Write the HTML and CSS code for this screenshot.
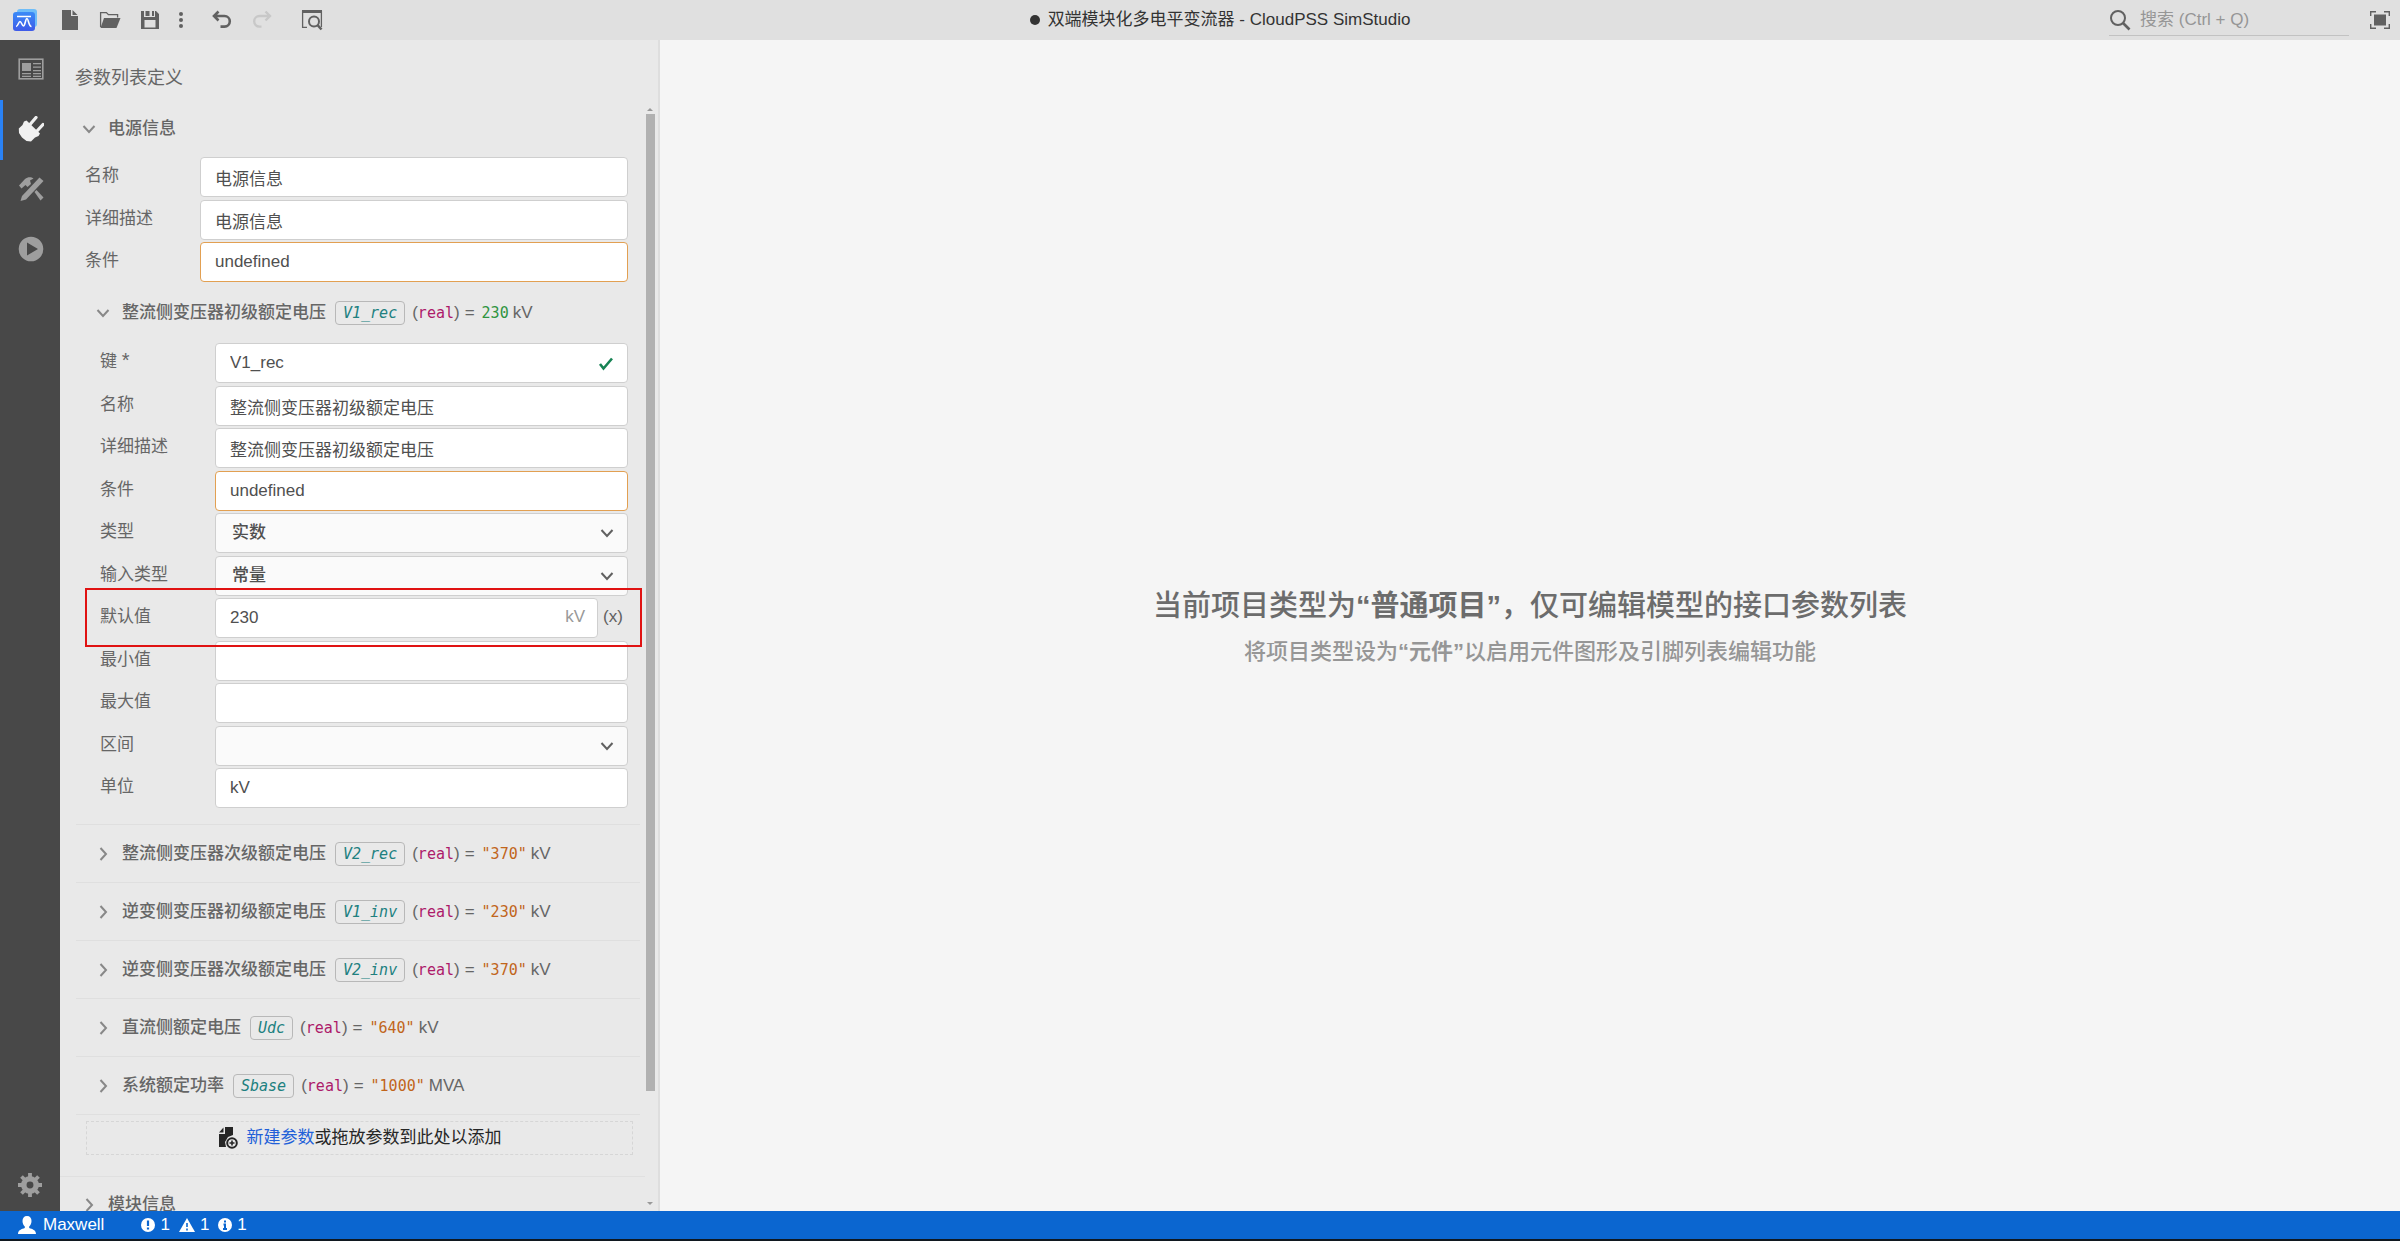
FILE: index.html
```html
<!DOCTYPE html>
<html lang="zh-CN">
<head>
<meta charset="utf-8">
<title>双端模块化多电平变流器 - CloudPSS SimStudio</title>
<link rel="stylesheet" href="styles.css">
</head>
<body>
<svg class="defs" width="0" height="0" aria-hidden="true">
  <symbol id="chev-down" viewBox="0 0 14 14"><path d="M1.500 4l5.500 6 5.500-6" fill="none" stroke="currentColor" stroke-width="2"/></symbol>
  <symbol id="chev-right" viewBox="0 0 14 14"><path d="M4.500 1l5.500 6-5.500 6" fill="none" stroke="currentColor" stroke-width="2"/></symbol>
</svg>

<header class="titlebar">
  <div class="toolbar">
    <span class="logo">
      <svg width="26" height="24" viewBox="0 0 26 24"><defs><linearGradient id="lg" x1="0" y1="0" x2="0" y2="1"><stop offset="0" stop-color="#3a8bf7"/><stop offset="1" stop-color="#3f5ae8"/></linearGradient></defs><rect x="5" y="1" width="20" height="18" rx="3" fill="#6fbdf8"/><rect x="1" y="4" width="22" height="19" rx="3" fill="url(#lg)"/><path d="M5 8.500h14" stroke="#fff" stroke-width="1.500"/><path d="M4 18.500c2 0 2.500-5 4-5s2 4.500 3.500 4.500 2-7.500 3.500-7.500 1.500 8 4.500 8" fill="none" stroke="#fff" stroke-width="1.600"/></svg>
    </span>
    <button class="tool" aria-label="新建"><svg width="20" height="22" viewBox="0 0 20 22"><path d="M2 1h9v6h7v14H2z" fill="currentColor"/><path d="M12.500 1l5 5h-5z" fill="currentColor"/></svg></button>
    <button class="tool" aria-label="打开"><svg width="22" height="20" viewBox="0 0 22 20"><path d="M1.600 17V2.600h5.800l2 2h9.200v3" fill="none" stroke="currentColor" stroke-width="1.300"/><path d="M5 8h16.500l-4 10H1.500z" fill="currentColor"/></svg></button>
    <button class="tool" aria-label="保存"><svg width="20" height="20" viewBox="0 0 20 20"><path fill-rule="evenodd" fill="currentColor" d="M1 1h3v6h11V1h1l3 3v15H1zM4.500 10v7.500h11V10z"/><path fill="currentColor" d="M5.500 1h4v5h-4zM12 1h2v5h-2z"/></svg></button>
    <button class="tool tool-narrow" aria-label="更多"><svg width="6" height="18" viewBox="0 0 6 18"><g fill="currentColor"><circle cx="3" cy="3" r="2"/><circle cx="3" cy="9" r="2"/><circle cx="3" cy="15" r="2"/></g></svg></button>
    <span class="tool-gap"></span>
    <button class="tool" aria-label="撤销"><svg width="22" height="20" viewBox="0 0 22 20"><path d="M7.500 1.500L3 6l4.500 4.500M3 6h10.500a5.300 5.300 0 0 1 0 10.600H9.500" fill="none" stroke="currentColor" stroke-width="2.600"/></svg></button>
    <button class="tool" aria-label="重做" disabled><svg width="22" height="20" viewBox="0 0 22 20"><path d="M14.500 1.500L19 6l-4.500 4.500M19 6H8.500a5.300 5.300 0 0 0 0 10.600h2" fill="none" stroke="currentColor" stroke-width="2.400"/></svg></button>
    <span class="tool-gap"></span>
    <button class="tool" aria-label="查找"><svg width="22" height="22" viewBox="0 0 22 22"><path d="M6 18.400H1.600V2.500h18.800V18" fill="none" stroke="currentColor" stroke-width="1.300"/><path d="M1 1h20v3H1z" fill="currentColor"/><circle cx="13" cy="12.500" r="5" fill="none" stroke="currentColor" stroke-width="2"/><path d="M16.500 16l4 4.500" stroke="currentColor" stroke-width="2.600"/></svg></button>
  </div>
  <h1 class="doc-title"><span class="dirty-dot"></span>双端模块化多电平变流器 - CloudPSS SimStudio</h1>
  <div class="title-right">
    <label class="search">
      <svg width="22" height="22" viewBox="0 0 22 22"><circle cx="9" cy="9" r="7" fill="none" stroke="currentColor" stroke-width="2"/><path d="M14 14l6.500 6.500" stroke="currentColor" stroke-width="2.600"/></svg>
      <input type="text" placeholder="搜索 (Ctrl + Q)" aria-label="搜索">
    </label>
    <button class="tool" aria-label="全屏"><svg width="20" height="18" viewBox="0 0 20 18"><path d="M4 3.500h12v11H4z" fill="currentColor"/><path d="M.7 5V.7H6M14 .7h5.300V5M19.300 13v4.300H14M6 17.300H.7V13" fill="none" stroke="currentColor" stroke-width="1.400"/></svg></button>
  </div>
</header>

<div class="workspace">
  <nav class="rail">
    <button class="rail-item" aria-label="概览"><svg width="26" height="22" viewBox="0 0 26 22"><rect x="1.200" y="1.200" width="23.600" height="19.600" fill="none" stroke="currentColor" stroke-width="1.600"/><path d="M4 5h9v8H4zM15 5h8v1.300h-8zM15 8.500h8v1.300h-8zM15 12h8v1.300h-8zM4 15h9v1.200H4zM15 15h8v1.200h-8zM4 17.800h9V19H4zM15 17.800h8V19h-8z" fill="currentColor"/></svg></button>
    <button class="rail-item active" aria-label="接口"><svg width="26" height="26" viewBox="0 0 26 26"><path d="M8.500 4.500L22 17.500 20.500 20 17 21.500 13 25.500 8.500 25 4 21.500 1 17 .8 12.500 4.500 9 6 5.500z" fill="currentColor"/><path d="M12 8.500l6-7M19 15l6-6.500" stroke="currentColor" stroke-width="3.200" stroke-linecap="round"/></svg></button>
    <button class="rail-item" aria-label="实现"><svg width="26" height="26" viewBox="0 0 26 26"><path d="M1 9.500L7 3C10 .5 13.500 1 15.500 2.500L12 4.500 13 8 9.500 11 7.500 9 3.500 12.500z" fill="currentColor"/><path d="M16.500 16l2-2 7 7.500-3 3z" fill="currentColor"/><path d="M21.500 1.500L25.500 5 8 23.500 2.500 25 4 20z" fill="currentColor"/></svg></button>
    <button class="rail-item" aria-label="运行"><svg width="26" height="26" viewBox="0 0 26 26"><path fill-rule="evenodd" fill="currentColor" d="M13 .7a12.300 12.300 0 1 0 0 24.600 12.300 12.300 0 0 0 0-24.600zM9 6.500L20 13 9 19.500z"/></svg></button>
    <span class="rail-space"></span>
    <button class="rail-item settings" aria-label="设置"><svg width="26" height="26" viewBox="0 0 26 26"><circle cx="13" cy="13" r="6.200" fill="none" stroke="currentColor" stroke-width="5.500"/><path d="M13 1v4M13 21v4M1 13h4M21 13h4M4.500 4.500l3 3M18.500 18.500l3 3M21.500 4.500l-3 3M7.500 18.500l-3 3" stroke="currentColor" stroke-width="3.800"/></svg></button>
  </nav>

  <aside class="panel">
    <h2 class="panel-title">参数列表定义</h2>
    <div class="scroller">
      <div class="content">
        <button class="group-head"><svg class="chev"><use href="#chev-down"/></svg>电源信息</button>
        <div class="fields group-fields">
          <div class="field"><label for="g-name">名称</label><input id="g-name" type="text" value="电源信息"></div>
          <div class="field"><label for="g-desc">详细描述</label><input id="g-desc" type="text" value="电源信息"></div>
          <div class="field"><label for="g-cond">条件</label><input id="g-cond" class="warn" type="text" value="undefined"></div>
        </div>

        <div class="params">
          <button class="param-head open"><svg class="chev"><use href="#chev-down"/></svg><span class="pname">整流侧变压器初级额定电压</span><code class="key">V1_rec</code><span>(<code class="type">real</code>)</span><span class="eq">=</span><code class="num">230</code><span class="unit">kV</span></button>
          <div class="fields param-fields">
            <div class="field"><label for="p-key">键 <span class="req">*</span></label><div class="box"><input id="p-key" type="text" value="V1_rec"><svg class="ok" width="16" height="16" viewBox="0 0 16 16"><path d="M2 8l3.500 4.500L14 2.500" fill="none" stroke="currentColor" stroke-width="2.600"/></svg></div></div>
            <div class="field"><label for="p-name">名称</label><input id="p-name" type="text" value="整流侧变压器初级额定电压"></div>
            <div class="field"><label for="p-desc">详细描述</label><input id="p-desc" type="text" value="整流侧变压器初级额定电压"></div>
            <div class="field"><label for="p-cond">条件</label><input id="p-cond" class="warn" type="text" value="undefined"></div>
            <div class="field"><label for="p-type">类型</label><div class="box"><select id="p-type"><option>实数</option></select><svg class="arrow"><use href="#chev-down"/></svg></div></div>
            <div class="field"><label for="p-input">输入类型</label><div class="box"><select id="p-input"><option>常量</option></select><svg class="arrow"><use href="#chev-down"/></svg></div></div>
            <div class="field marked"><label for="p-def">默认值</label><div class="box"><input id="p-def" type="text" value="230"><span class="suffix">kV</span></div><button class="expr">(x)</button></div>
            <div class="field"><label for="p-min">最小值</label><input id="p-min" type="text"></div>
            <div class="field"><label for="p-max">最大值</label><input id="p-max" type="text"></div>
            <div class="field"><label for="p-range">区间</label><div class="box"><select id="p-range"><option></option></select><svg class="arrow"><use href="#chev-down"/></svg></div></div>
            <div class="field"><label for="p-unit">单位</label><input id="p-unit" type="text" value="kV"></div>
          </div>
          <button class="param-head"><svg class="chev"><use href="#chev-right"/></svg><span class="pname">整流侧变压器次级额定电压</span><code class="key">V2_rec</code><span>(<code class="type">real</code>)</span><span class="eq">=</span><code class="str">"370"</code><span class="unit">kV</span></button>
          <button class="param-head"><svg class="chev"><use href="#chev-right"/></svg><span class="pname">逆变侧变压器初级额定电压</span><code class="key">V1_inv</code><span>(<code class="type">real</code>)</span><span class="eq">=</span><code class="str">"230"</code><span class="unit">kV</span></button>
          <button class="param-head"><svg class="chev"><use href="#chev-right"/></svg><span class="pname">逆变侧变压器次级额定电压</span><code class="key">V2_inv</code><span>(<code class="type">real</code>)</span><span class="eq">=</span><code class="str">"370"</code><span class="unit">kV</span></button>
          <button class="param-head"><svg class="chev"><use href="#chev-right"/></svg><span class="pname">直流侧额定电压</span><code class="key">Udc</code><span>(<code class="type">real</code>)</span><span class="eq">=</span><code class="str">"640"</code><span class="unit">kV</span></button>
          <button class="param-head"><svg class="chev"><use href="#chev-right"/></svg><span class="pname">系统额定功率</span><code class="key">Sbase</code><span>(<code class="type">real</code>)</span><span class="eq">=</span><code class="str">"1000"</code><span class="unit">MVA</span></button>
          <div class="drop-wrap">
            <div class="drop">
              <svg width="20" height="24" viewBox="0 0 20 24"><path d="M7 1h8v8l-5 2-3 5 1 5H1V8h6z" fill="currentColor"/><path d="M5.500 1.500v5H1z" fill="currentColor"/><circle cx="14" cy="17" r="4.800" fill="none" stroke="currentColor" stroke-width="2"/><path d="M14 14.500v5M11.500 17h5" stroke="currentColor" stroke-width="1.600"/></svg>
              <p><a href="#new">新建参数</a>或拖放参数到此处以添加</p>
            </div>
          </div>
        </div>
        <button class="group-head next"><svg class="chev"><use href="#chev-right"/></svg>模块信息</button>
      </div>
      <div class="scrollbar"><span class="tri up"></span><div class="track"><div class="thumb"></div></div><span class="tri down"></span></div>
    </div>
  </aside>

  <main class="stage">
    <p class="msg">当前项目类型为<q>普通项目</q>，仅可编辑模型的接口参数列表</p>
    <p class="hint">将项目类型设为<q>元件</q>以启用元件图形及引脚列表编辑功能</p>
  </main>
</div>

<footer class="statusbar">
  <span class="user"><svg width="18" height="18" viewBox="0 0 18 18"><path d="M9 0c3 0 4.500 2 4.500 5 0 2.500-1 4.500-2.300 5.500v1.500c3 1 6.800 2 6.800 6H0c0-4 3.800-5 6.800-6v-1.500C5.500 9.500 4.500 7.500 4.500 5c0-3 1.500-5 4.500-5z" fill="currentColor"/></svg>Maxwell</span>
  <span class="stat"><svg width="14" height="14" viewBox="0 0 14 14"><circle cx="7" cy="7" r="7" fill="#fff"/><path d="M7 2.500v5.500M7 9.500v2" stroke="#0b66d0" stroke-width="2.200"/></svg>1</span>
  <span class="stat"><svg width="16" height="14" viewBox="0 0 16 14"><path d="M8 0l8 14H0z" fill="#fff"/><path d="M8 5v4M8 10.500v2" stroke="#0b66d0" stroke-width="1.600"/></svg>1</span>
  <span class="stat"><svg width="14" height="14" viewBox="0 0 14 14"><circle cx="7" cy="7" r="7" fill="#fff"/><path d="M7 2.500v2M5.500 6.500H7V11M5 11h4" fill="none" stroke="#0b66d0" stroke-width="2"/></svg>1</span>
</footer>
<div class="edge"></div>
</body>
</html>
```

FILE: styles.css
```css
* { box-sizing: border-box; }
body {
  margin: 0;
  height: 100vh;
  display: flex;
  flex-direction: column;
  overflow: hidden;
  font: 17px/24px "Liberation Sans", "Noto Sans CJK SC", sans-serif;
  color: #333;
  background: #f5f5f5;
}
.defs { position: absolute; }
button, input, select { font: inherit; color: inherit; margin: 0; }
button { border: 0; padding: 0; background: none; }
svg { display: block; flex: none; }
p, h1, h2 { margin: 0; font-size: inherit; font-weight: inherit; }

/* Title bar */
.titlebar {
  flex: none;
  height: 40px;
  display: grid;
  grid-template-columns: 1fr auto 1fr;
  align-items: center;
  background: #e0e0e0;
}
.toolbar { display: flex; align-items: center; color: #616161; }
.logo { width: 50px; display: flex; justify-content: center; }
.tool { width: 40px; height: 40px; display: flex; align-items: center; justify-content: center; color: #616161; }
.tool:disabled { color: #c8c8c8; }
.tool-narrow { width: 22px; }
.tool-gap { width: 10px; }
.doc-title { display: flex; align-items: center; gap: 8px; padding-left: 40px; }
.dirty-dot { width: 10px; height: 10px; border-radius: 50%; background: #333; }
.title-right { display: flex; justify-content: flex-end; align-items: center; gap: 11px; }
.search {
  width: 240px;
  display: flex;
  align-items: center;
  gap: 9px;
  height: 32px;
  border-bottom: 1px solid #c2c2c2;
  color: #616161;
}
.search input { flex: 1; min-width: 0; border: 0; padding: 0; background: none; outline: 0; }
.search input::placeholder { color: #969696; }

/* Workspace */
.workspace { flex: 1; min-height: 0; display: flex; }
.rail { flex: none; width: 60px; display: flex; flex-direction: column; background: #484848; color: #9e9e9e; }
.rail-item {
  height: 60px;
  padding: 0 2px 2px 1px;
  display: flex;
  align-items: center;
  justify-content: center;
  border-left: 3px solid transparent;
}
.rail-item.active { border-color: #2a82f5; color: #f0f0f0; }
.rail-item.settings { height: 52px; padding: 0 3px 0 0; }
.rail-space { flex: 1; }

.panel {
  flex: none;
  width: 25%;
  display: flex;
  flex-direction: column;
  background: #e9e9e9;
  border-right: 2px solid #dedede;
  color: #666;
}
.panel-title { padding: 25px 15px 9px; font-size: 18px; line-height: 26px; }
.scroller { flex: 1; min-height: 0; display: flex; overflow: hidden; padding-top: 8px; }
.content { flex: 1; min-width: 0; }
.scrollbar { flex: none; width: 13px; padding-right: 3px; display: flex; flex-direction: column; align-items: center; }
.track { flex: 1; width: 9px; margin: 3px 0; }
.thumb { height: 90%; background: #b1b1b1; }
.tri { border: 3px solid transparent; }
.up { border-bottom-color: #999; border-top: 0; }
.down { border-top-color: #999; border-bottom: 0; margin-bottom: 6px; }

.group-head { width: 100%; height: 42px; padding-left: 22px; display: flex; align-items: center; gap: 12px; font-weight: 500; }
.chev { width: 14px; height: 14px; color: #888; }
.next { height: 56px; border-top: 1px solid #e0e0e0; }

.fields { padding-right: 17px; }
.group-fields { padding-left: 25px; padding-top: 7px; }
.param-fields { padding-left: 24px; padding-bottom: 13px; }
.field { display: flex; align-items: flex-start; padding-bottom: 2px; }
.field:nth-child(odd) { padding-bottom: 3px; }
.field label { width: 115px; line-height: 38px; }
.req { font-size: 20px; line-height: 24px; }
.field > input, .box { flex: 1; min-width: 0; }
.box { position: relative; display: flex; }
.field input, .field select {
  width: 100%;
  height: 40px;
  padding: 0 14px;
  border: 1px solid #cfcfcf;
  border-radius: 4px;
  background: #fff;
  color: #505050;
  outline: 0;
}
.field select { appearance: none; padding: 0 16px; background: #fafafa; font-weight: 500; }
.field input.warn { border-color: #e2a052; }
.ok, .arrow, .suffix { position: absolute; right: 14px; top: 13px; pointer-events: none; }
.ok { color: #178354; }
.arrow { width: 14px; height: 14px; color: #616161; }
.suffix { top: 7px; right: 13px; color: #999; }
.expr { width: 30px; height: 38px; font-weight: 500; color: #616161; }
.marked { position: relative; }
.marked::after {
  content: "";
  position: absolute;
  inset: -10px -14px -6px -15px;
  border: 2px solid #e01212;
  pointer-events: none;
}

.params { padding-left: 16px; padding-right: 5px; }
.params .fields { padding-right: 12px; }
.param-head {
  width: 100%;
  height: 58px;
  padding-left: 20px;
  display: flex;
  align-items: center;
  border-top: 1px solid #dfdfdf;
  white-space: nowrap;
}
.param-head.open { padding-bottom: 2px; border-top: 0; }
.pname { margin: 0 9px 0 12px; font-weight: 500; }
code { font: 15px/22px "DejaVu Sans Mono", monospace; }
.key {
  padding: 0 7px;
  margin-right: 7px;
  border: 1px solid #b8b8b8;
  border-radius: 4px;
  font-style: italic;
  color: #20807f;
}
.type { color: #ad1a6a; }
.eq { margin: 0 7px 0 5px; }
.num { color: #2f9440; }
.str { color: #c1651b; }
.unit { margin-left: 4px; }
.drop-wrap { border-top: 1px solid #dfdfdf; padding: 6px 7px 21px 10px; }
.drop { height: 34px; border: 1px dashed #d6d6d6; display: flex; align-items: center; justify-content: center; gap: 9px; color: #262626; }
.drop a { color: #2260d8; text-decoration: none; }

/* Canvas message */
.stage { flex: 1; display: flex; flex-direction: column; align-items: center; justify-content: center; font-weight: 500; padding-top: 6px; }
.stage q { font-weight: 700; quotes: "“" "”"; }
.msg { font-size: 29px; line-height: 46px; color: #6c6c6c; }
.hint { font-size: 22px; line-height: 46px; color: #969696; }

/* Status bar */
.statusbar { flex: none; height: 28px; padding-left: 18px; display: flex; align-items: center; background: #0b66d0; color: #fff; }
.user { display: flex; align-items: center; gap: 7px; margin-right: 37px; }
.stat { display: flex; align-items: center; gap: 5px; margin-right: 9px; }
.edge { flex: none; height: 2px; background: #101820; }
```
